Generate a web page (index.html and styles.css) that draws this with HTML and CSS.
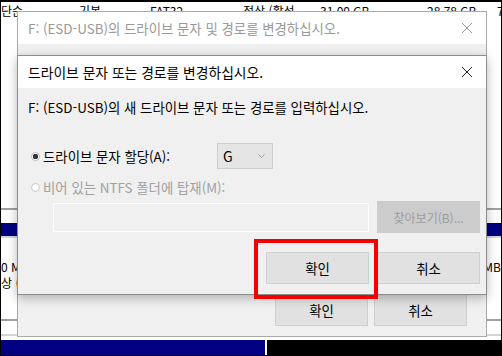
FILE: index.html
```html
<!DOCTYPE html>
<html lang="ko">
<head>
  <meta charset="UTF-8">
  <meta name="viewport" content="width=device-width, initial-scale=1">
  <title>드라이브 문자 및 경로 변경</title>
  <link rel="stylesheet" href="styles.css">
</head>
<body>
  <div class="screen">
    <!-- disk management window underneath -->
    <div class="desk">
      <div class="vol-row">
        <span>단순</span>
        <span>기본</span>
        <span>FAT32</span>
        <span>정상 (활성</span>
        <span>31.00 GB</span>
        <span>28.78 GB</span>
        <span>7</span>
      </div>
      <div class="desk-gap"></div>
      <div class="rule"></div>
      <div class="band"></div>
      <div class="rule light"></div>
      <div class="part">
        <div class="part-left">
          <span>0 MB</span>
          <span>상 (주</span>
        </div>
        <div class="part-right">MB</div>
      </div>
      <div class="rule"></div>
      <div class="rule light"></div>
      <div class="bottom-band">
        <div class="band-navy"></div>
        <div class="band-black"></div>
      </div>
    </div>

    <!-- back dialog (inactive) -->
    <div class="dialog back">
      <div class="titlebar">
        <span class="title">F: (ESD-USB)의 드라이브 문자 및 경로를 변경하십시오.</span>
        <svg class="close" width="12" height="12" viewBox="0 0 12 12"><path d="M1 1L11 11M11 1L1 11" stroke="currentColor" stroke-width="1"/></svg>
      </div>
      <div class="body back-body">
        <div class="actions back-actions">
          <button class="btn">확인</button>
          <button class="btn">취소</button>
        </div>
      </div>
    </div>

    <!-- front dialog -->
    <div class="dialog front">
      <div class="titlebar">
        <span class="title">드라이브 문자 또는 경로를 변경하십시오.</span>
        <svg class="close" width="12" height="12" viewBox="0 0 12 12"><path d="M1 1L11 11M11 1L1 11" stroke="currentColor" stroke-width="1"/></svg>
      </div>
      <div class="body">
        <p class="lead">F: (ESD-USB)의 새 드라이브 문자 또는 경로를 입력하십시오.</p>
        <div class="opt-row">
          <label class="opt"><span class="radio on"></span>드라이브 문자 할당(A):</label>
          <div class="combo">
            <span>G</span>
            <svg width="7" height="4" viewBox="0 0 7 4"><path d="M0.5 0.5L3.5 3.5L6.5 0.5" fill="none" stroke="#999" stroke-width="1"/></svg>
          </div>
        </div>
        <label class="opt off"><span class="radio"></span>비어 있는 NTFS 폴더에 탑재(M):</label>
        <div class="path-row">
          <div class="field"></div>
          <button class="btn browse" disabled>찾아보기(B)...</button>
        </div>
        <div class="actions">
          <button class="btn">확인</button>
          <button class="btn">취소</button>
        </div>
      </div>
    </div>

    <div class="highlight"></div>
  </div>
</body>
</html>
```

FILE: styles.css
```css
* {
  box-sizing: border-box;
}
body {
  margin: 0;
  background: #000;
  font-family: "Noto Sans CJK KR", "Noto Sans", sans-serif;
}
.screen {
  position: relative;
  width: 502px;
  height: 356px;
  overflow: hidden;
  background: #fff;
  border: 1px solid #000;
  border-top-width: 2px;
}

/* background window */
.desk {
  display: flex;
  flex-direction: column;
  height: 100%;
  font-size: 12px;
  color: #000;
}
.vol-row {
  display: grid;
  grid-template-columns: 78px 71px 93px 77px 107px 70px 1fr;
  height: 16px;
  line-height: 16px;
  padding-top: 1px;
  white-space: nowrap;
}
.desk-gap {
  height: 193px;
}
.rule {
  height: 2px;
  background: #a0a0a0;
  margin-bottom: 13px;
}
.rule.light {
  background: #d4d4d4;
  margin-bottom: 0;
}
.band {
  height: 13px;
  background: #000080;
}
.part {
  display: flex;
  justify-content: space-between;
  height: 82px;
  padding-top: 21px;
  line-height: 16px;
}
.part-left {
  display: flex;
  flex-direction: column;
}
.bottom-band {
  display: flex;
  height: 15px;
  margin-top: 4px;
}
.band-navy {
  width: 266px;
  background: #000080;
  border-right: 2px solid #fff;
}
.band-black {
  flex: 1;
  background: #000;
}

/* dialogs */
.dialog {
  position: absolute;
  left: 16px;
  width: 470px;
  display: flex;
  flex-direction: column;
  background: #f0f0f0;
  border: 1px solid #8c8c8c;
}
.dialog.back {
  top: 9px;
  height: 326px;
  border-color: #aaa;
}
.dialog.front {
  top: 53px;
  height: 240px;
  box-shadow: 0 3px 10px rgba(0,0,0,0.28);
}
.titlebar {
  display: flex;
  align-items: center;
  justify-content: space-between;
  height: 32px;
  flex-shrink: 0;
  padding: 0 13px 0 10px;
  background: #fff;
  color: #000;
  font-size: 13.8px;
  white-space: nowrap;
}
.back .titlebar {
  color: #999;
  font-size: 13.4px;
}
.close {
  color: #222;
}
.back .close {
  color: #999;
}
.body {
  flex: 1;
  display: flex;
  flex-direction: column;
  padding: 10px 6px 0 10px;
  font-size: 13.4px;
  color: #000;
  white-space: nowrap;
}
.back-body {
  justify-content: flex-end;
  padding: 0 19px 10px 0;
}
.lead {
  margin: 0;
  line-height: 18px;
}
.opt-row {
  display: flex;
  align-items: center;
  margin-top: 27px;
  height: 26px;
}
.opt {
  display: flex;
  align-items: center;
  line-height: 18px;
}
.opt-row .opt {
  width: 189px;
}
.opt.off {
  color: #a0a0a0;
  margin-top: 9px;
}
.radio {
  width: 9px;
  height: 9px;
  border-radius: 50%;
  border: 1px solid #c8c8c8;
  background: #fff;
  margin: 0 3px 0 3px;
  flex-shrink: 0;
}
.radio.on {
  border-color: #bdbdbd;
  background: radial-gradient(circle, #333 0 2.5px, #fff 3px);
}
.combo {
  display: flex;
  align-items: center;
  justify-content: space-between;
  width: 56px;
  height: 26px;
  padding: 0 7px 0 5px;
  background: #e5e5e5;
  border: 1px solid #cdcdcd;
  font-size: 14px;
}
.path-row {
  display: flex;
  align-items: center;
  gap: 8px;
  margin-top: 5px;
  padding-left: 25px;
}
.field {
  width: 317px;
  height: 29px;
  border: 1px solid #fcfcfc;
  background: #f0f0f0;
}
.btn {
  width: 103px;
  height: 32px;
  padding: 0;
  background: #e1e1e1;
  border: 1px solid #cfcfcf;
  font-family: inherit;
  font-size: 13.4px;
  color: #000;
}
.btn.browse {
  background: #cccccc;
  border-color: #cccccc;
  color: #9c9c9c;
  font-size: 12px;
}
.actions {
  display: flex;
  justify-content: flex-end;
  gap: 8px;
  margin-top: 19px;
}
.back-actions {
  gap: 6px;
  margin-top: 0;
}
.back-actions .btn {
  width: 93px;
}
.highlight {
  position: absolute;
  left: 253px;
  top: 237px;
  width: 124px;
  height: 60px;
  border: 4px solid #f40000;
}
```
